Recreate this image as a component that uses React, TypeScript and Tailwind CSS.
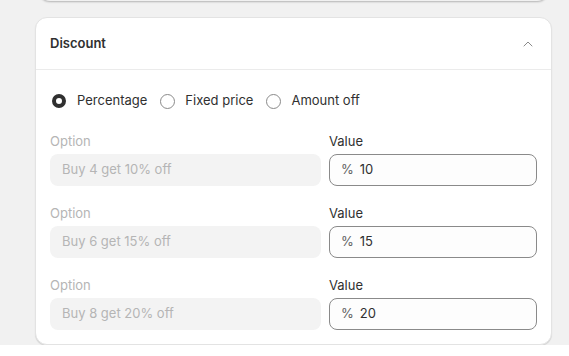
import { ChevronUp } from 'lucide-react';

const rows = [
  { option: 'Buy 4 get 10% off', value: '10' },
  { option: 'Buy 6 get 15% off', value: '15' },
  { option: 'Buy 8 get 20% off', value: '20' },
];

const Radio = ({ checked, label }: { checked?: boolean; label: string }) => (
  <label className="flex items-center gap-[10px]">
    <span className="w-4 h-4 flex items-center justify-center">
      {checked ? (
        <span className="w-[14px] h-[14px] rounded-full border-[4px] border-[#303030] bg-white" />
      ) : (
        <span className="w-[15px] h-[15px] rounded-full border border-[#8a8a8a] bg-white" />
      )}
    </span>
    <span className="text-[13px] text-[#303030]">{label}</span>
  </label>
);

export default function App() {
  return (
    <div
      className="min-h-[356px] bg-[#f1f1f1] px-[35px] pr-[17px]"
      style={{ fontFamily: 'Inter, "Noto Sans", sans-serif' }}
    >
      {/* previous card, only its bottom edge is visible */}
      <div className="-mt-[40px] h-[41px] mx-[3px] rounded-b-xl bg-[#f1f1f1] shadow-[0_1px_2px_rgba(0,0,0,0.25)]" />

      <div className="mt-[16px] bg-white rounded-xl border border-[#e3e3e3] shadow-[0_1px_1px_rgba(0,0,0,0.12)]">
        {/* Header */}
        <div className="h-[52px] flex items-center justify-between px-[14px] border-b border-[#ebebeb]">
          <h2 className="text-[13px] font-semibold text-[#303030]">Discount</h2>
          <ChevronUp className="w-4 h-4 text-[#8a8a8a] mr-[1px]" strokeWidth={1.5} />
        </div>

        {/* Body */}
        <div className="px-[14px] pt-[21px] pb-[14px]">
          <div className="flex items-center gap-[12px] h-5 pl-[1px]">
            <Radio checked label="Percentage" />
            <Radio label="Fixed price" />
            <Radio label="Amount off" />
          </div>

          <div className="mt-[20px] flex flex-col gap-[17px]">
            {rows.map((r) => (
              <div key={r.value} className="grid grid-cols-[271px_208px] gap-x-2 gap-y-[3px]">
                <span className="text-[13px] leading-5 text-[#b5b5b5]">Option</span>
                <span className="text-[13px] leading-5 text-[#303030]">Value</span>
                <div className="h-8 rounded-lg bg-[#f3f3f3] flex items-center px-3 text-[13px] text-[#b5b5b5]">
                  {r.option}
                </div>
                <div className="h-8 rounded-lg border border-[#8a8a8a] bg-[#fdfdfd] flex items-center pl-[11px] pr-3 gap-[6px] text-[13px]">
                  <span className="text-[#616161]">%</span>
                  <span className="text-[#303030]">{r.value}</span>
                </div>
              </div>
            ))}
          </div>
        </div>
      </div>
    </div>
  );
}
